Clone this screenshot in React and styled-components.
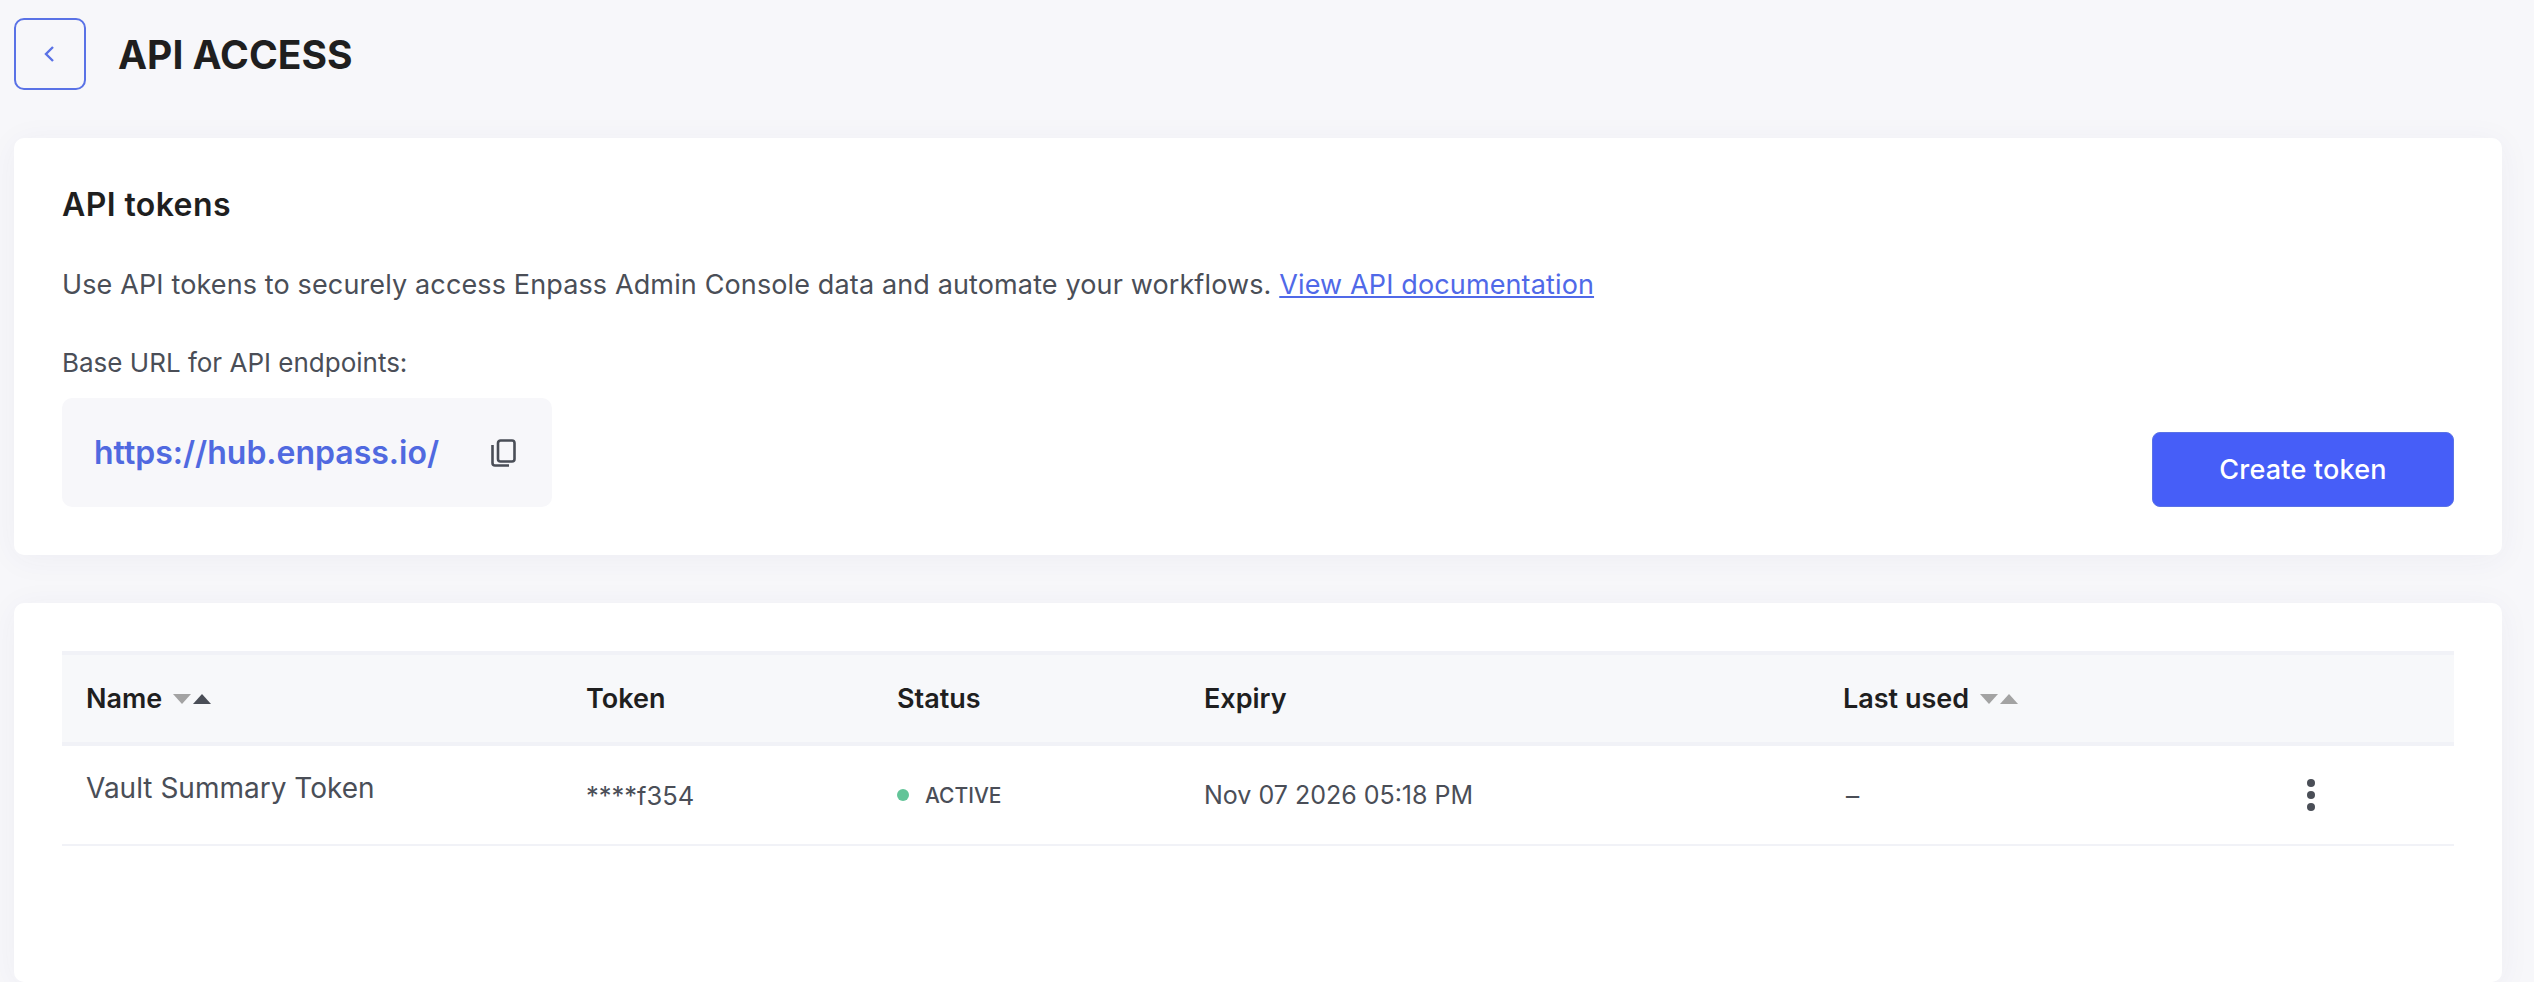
import React from "react";
import styled, { createGlobalStyle } from "styled-components";

const GlobalStyle = createGlobalStyle`
  html, body {
    margin: 0;
    padding: 0;
    height: 100%;
    background-color: #f7f7fa;
    font-family: Inter, "Open Sans", sans-serif;
    overflow: hidden;
  }
`;

const Page = styled.div`
  height: 982px;
  padding: 18px 32px 0 14px;
  box-sizing: border-box;
  display: flex;
  flex-direction: column;
`;

const Header = styled.div`
  display: flex;
  align-items: center;
  gap: 32px;
  margin-bottom: 48px;
`;

const BackButton = styled.button`
  width: 72px;
  height: 72px;
  padding: 0;
  background: transparent;
  border: 2px solid #5a72e6;
  border-radius: 10px;
  color: #5a72e6;
  display: flex;
  align-items: center;
  justify-content: center;
`;

const Title = styled.h1`
  margin: 0;
  font-size: 39px;
  font-weight: 700;
  color: #1f1f1f;
`;

const Card = styled.section`
  background-color: #fff;
  border-radius: 10px;
  box-shadow: 0 4px 32px rgba(60, 60, 110, 0.05);
  padding: ${({ $padding }) => $padding};
  margin-top: ${({ $top }) => $top || 0}px;
  flex: ${({ $fill }) => ($fill ? 1 : "none")};
  height: ${({ $height }) => $height || "auto"};
  box-sizing: border-box;
`;

const CardTitle = styled.h2`
  margin: 0 0 45px;
  font-size: 32px;
  line-height: 36px;
  font-weight: 600;
  letter-spacing: 0.4px;
  color: #1f1f1f;
`;

const Text = styled.p`
  margin: 0 0 ${({ $gap }) => $gap}px;
  font-size: ${({ $size }) => $size}px;
  line-height: 34px;
  letter-spacing: ${({ $spacing }) => $spacing || 0}px;
  color: #4a4e57;
`;

const DocLink = styled.a`
  color: #5069e8;
  text-decoration: underline;
`;

const BaseRow = styled.div`
  display: flex;
  align-items: flex-end;
  justify-content: space-between;
`;

const UrlBox = styled.div`
  width: 490px;
  height: 109px;
  box-sizing: border-box;
  padding: 0 36px 0 32px;
  background-color: #f7f7fa;
  border-radius: 10px;
  display: flex;
  align-items: center;
  justify-content: space-between;
`;

const UrlText = styled.span`
  font-size: 32px;
  font-weight: 600;
  color: #5069e0;
`;

const CreateButton = styled.button`
  width: 302px;
  height: 75px;
  background-color: #465ef8;
  border: 1px solid #5a72e6;
  border-radius: 8px;
  color: #fff;
  font-family: inherit;
  font-size: 27px;
  font-weight: 500;
  letter-spacing: 0.2px;
`;

const Row = styled.div`
  display: grid;
  grid-template-columns: 500px 311px 307px 639px 466px 169px;
  align-items: center;
  box-sizing: border-box;
  height: ${({ $head }) => ($head ? "95px" : "100px")};
  background-color: ${({ $head }) => ($head ? "#f7f8fa" : "#fff")};
  border-top: ${({ $head }) => ($head ? "4px solid #f1f2f7" : "0")};
  border-bottom: ${({ $head }) => ($head ? "4px" : "2px")} solid #f1f2f7;
`;

const HeadCell = styled.div`
  padding-left: 24px;
  display: flex;
  align-items: center;
  gap: 10px;
  font-size: 27px;
  font-weight: 600;
  color: #1f1f1f;
`;

const Cell = styled.div`
  padding-left: 24px;
  padding-bottom: ${({ $raised }) => ($raised ? "14px" : "0")};
  font-size: ${({ $size }) => $size || 26}px;
  color: #4a4e57;
  display: flex;
  align-items: center;
`;

const MenuCell = styled.div`
  padding-left: 21px;
  display: flex;
  align-items: center;
`;

const Dash = styled.span`
  display: inline-block;
  transform: scaleX(1.6);
  transform-origin: left center;
`;

const Dot = styled.span`
  width: 12px;
  height: 12px;
  border-radius: 50%;
  background-color: #62c498;
  margin-right: 16px;
`;

const StatusLabel = styled.span`
  font-size: 21px;
  font-weight: 500;
  color: #4a4e57;
`;

const SortIcon = ({ active }) => (
  <svg width="40" height="12" viewBox="0 0 40 12">
    <polygon points="1,1 19,1 10,11" fill="#a3a3a3" />
    <polygon points="21,11 39,11 30,1" fill={active ? "#4a4e57" : "#a3a3a3"} />
  </svg>
);

const columns = [
  { label: "Name", sort: true, active: true },
  { label: "Token" },
  { label: "Status" },
  { label: "Expiry" },
  { label: "Last used", sort: true },
  { label: "" },
];

export default function App() {
  return (
    <Page>
      <GlobalStyle />
      <Header>
        <BackButton>
          <svg width="16" height="18" viewBox="0 0 16 18" fill="none">
            <path d="M11 2 L4 9 L11 16" stroke="currentColor" strokeWidth="2.4" />
          </svg>
        </BackButton>
        <Title>API ACCESS</Title>
      </Header>
      <Card $padding="49px 48px 48px" $height="417px">
        <CardTitle>API tokens</CardTitle>
        <Text $gap={44} $size={27} $spacing={0.13}>
          Use API tokens to securely access Enpass Admin Console data and automate your workflows.{" "}
          <DocLink>View API documentation</DocLink>
        </Text>
        <Text $gap={18} $size={26}>Base URL for API endpoints:</Text>
        <BaseRow>
          <UrlBox>
            <UrlText>https://hub.enpass.io/</UrlText>
            <svg width="25" height="28" viewBox="0 0 25 28" fill="none" stroke="#4a4e57" strokeWidth="2.6">
              <rect x="7" y="1.5" width="16.5" height="21" rx="2.5" />
              <path d="M1.5 6 V24 Q1.5 26.5 4 26.5 H18" />
            </svg>
          </UrlBox>
          <CreateButton>Create token</CreateButton>
        </BaseRow>
      </Card>
      <Card $padding="48px 48px 0" $fill $top={48}>
        <Row $head>
          {columns.map((c) => (
            <HeadCell key={c.label}>
              {c.label}
              {c.sort && <SortIcon active={c.active} />}
            </HeadCell>
          ))}
        </Row>
        <Row>
          <Cell $raised $size={28}>Vault Summary Token</Cell>
          <Cell $size={25.5}>****f354</Cell>
          <Cell>
            <Dot />
            <StatusLabel>ACTIVE</StatusLabel>
          </Cell>
          <Cell $size={25}>Nov 07 2026 05:18 PM</Cell>
          <Cell>
            <Dash>-</Dash>
          </Cell>
          <MenuCell>
            <svg width="10" height="32" viewBox="0 0 10 32" fill="#4a4e57">
              <circle cx="5" cy="4" r="4" />
              <circle cx="5" cy="16" r="4" />
              <circle cx="5" cy="28" r="4" />
            </svg>
          </MenuCell>
        </Row>
      </Card>
    </Page>
  );
}
